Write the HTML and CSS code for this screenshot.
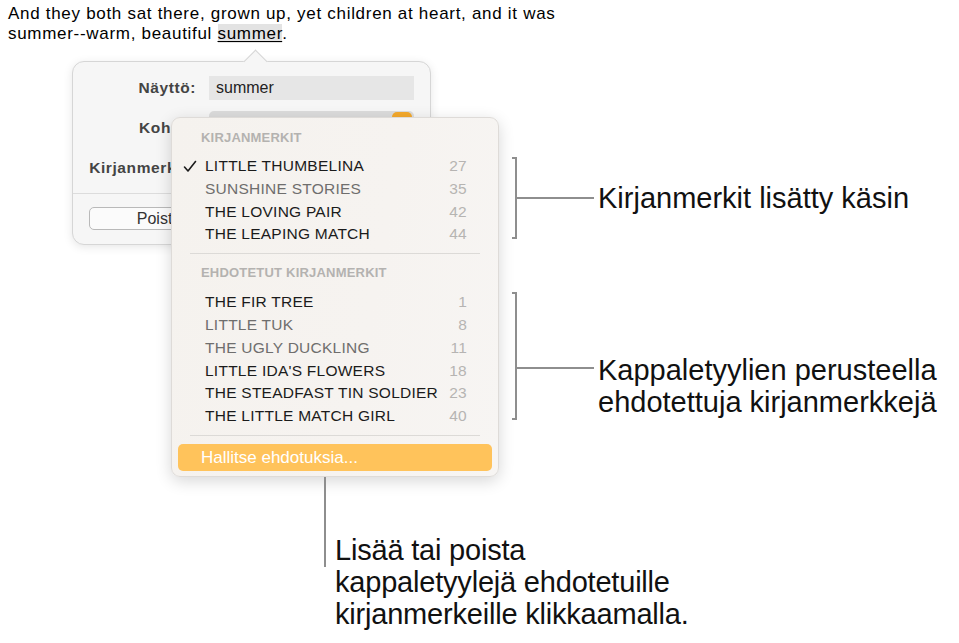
FILE: index.html
```html
<!DOCTYPE html>
<html>
<head>
<meta charset="utf-8">
<link rel="stylesheet" href="styles.css">
</head>
<body>
<div class="page">
  <p class="doc">And they both sat there, grown up, yet children at heart, and it was<br>summer--warm, beautiful <span class="sel">summer</span>.</p>

  <div class="popover">
    <div class="arrow"></div>
    <div class="pop-body">
      <div class="row r1">
        <span class="lbl">Näyttö:</span>
        <span class="field">summer</span>
      </div>
      <div class="row r2">
        <span class="lbl">Kohde:</span>
        <span class="field popup"><span class="stepper"></span></span>
      </div>
      <div class="row r3">
        <span class="lbl">Kirjanmerkki:</span>
      </div>
    </div>
    <div class="pop-foot">
      <span class="btn">Poista</span>
    </div>
  </div>

  <div class="menu">
    <div class="hdr">KIRJANMERKIT</div>
    <ul class="items">
      <li class="on"><svg class="chk" width="14" height="13" viewBox="0 0 14 13"><polyline points="1.5,7 5,11 12.5,1.5" fill="none" stroke="#1b1b1b" stroke-width="1.6" stroke-linecap="round" stroke-linejoin="round"/></svg><span class="name">LITTLE THUMBELINA</span><span class="num">27</span></li>
      <li class="dim"><span class="name">SUNSHINE STORIES</span><span class="num">35</span></li>
      <li><span class="name">THE LOVING PAIR</span><span class="num">42</span></li>
      <li><span class="name">THE LEAPING MATCH</span><span class="num">44</span></li>
    </ul>
    <div class="sep"></div>
    <div class="hdr">EHDOTETUT KIRJANMERKIT</div>
    <ul class="items">
      <li><span class="name">THE FIR TREE</span><span class="num">1</span></li>
      <li class="dim"><span class="name">LITTLE TUK</span><span class="num">8</span></li>
      <li class="dim"><span class="name">THE UGLY DUCKLING</span><span class="num">11</span></li>
      <li><span class="name">LITTLE IDA'S FLOWERS</span><span class="num">18</span></li>
      <li><span class="name">THE STEADFAST TIN SOLDIER</span><span class="num">23</span></li>
      <li><span class="name">THE LITTLE MATCH GIRL</span><span class="num">40</span></li>
    </ul>
    <div class="sep sep2"></div>
    <div class="manage">Hallitse ehdotuksia...</div>
  </div>

  <div class="callout c1">
    <div class="bracket b1"></div>
    <div class="lead"></div>
    <div class="ctext">Kirjanmerkit lisätty käsin</div>
  </div>

  <div class="callout c2">
    <div class="bracket b2"></div>
    <div class="lead"></div>
    <div class="ctext">Kappaletyylien perusteella<br>ehdotettuja kirjanmerkkejä</div>
  </div>

  <div class="callout c3">
    <div class="vline"></div>
    <div class="ctext">Lisää tai poista<br>kappaletyylejä ehdotetuille<br>kirjanmerkeille klikkaamalla.</div>
  </div>
</div>
</body>
</html>
```

FILE: styles.css
```css
* { box-sizing: border-box; }
html, body {
  margin: 0;
  padding: 0;
  background: #ffffff;
}
.page {
  position: relative;
  width: 959px;
  height: 643px;
  overflow: hidden;
  font-family: "Liberation Sans", Arial, sans-serif;
  color: #000;
}
.doc {
  margin: 0;
  padding: 4px 0 0 8px;
  font-size: 17px;
  line-height: 19.5px;
  letter-spacing: 0.7px;
}
.sel {
  background: #e3e3e3;
  text-decoration: underline;
  text-decoration-thickness: 1px;
  text-underline-offset: 2px;
}

/* popover */
.popover {
  position: relative;
  margin: 18px 0 0 72px;
  width: 359px;
  height: 184px;
  background: #f6f6f6;
  border: 1px solid #d6d6d6;
  border-radius: 12px;
  box-shadow: 0 2px 10px rgba(0,0,0,0.10);
}
.arrow {
  position: absolute;
  left: 174px;
  top: -9px;
  width: 17px;
  height: 17px;
  background: #f6f6f6;
  border-left: 1px solid #d6d6d6;
  border-top: 1px solid #d6d6d6;
  transform: rotate(45deg);
}
.pop-body {
  position: relative;
  padding-top: 14px;
  height: 132px;
  border-bottom: 1px solid #dcdcdc;
}
.row {
  display: flex;
  align-items: center;
  height: 24px;
}
.r2 { margin-top: 16px; }
.r3 { margin-top: 16px; }
.lbl {
  flex: none;
  width: 123px;
  text-align: right;
  font-weight: bold;
  font-size: 15.5px;
  color: #444;
  letter-spacing: 0.6px;
}
.field {
  margin-left: 13px;
  width: 205px;
  height: 24px;
  background: #e6e6e6;
  font-size: 16px;
  color: #222;
  padding: 3px 7px;
}
.popup {
  position: relative;
  align-self: flex-start;
  margin-top: -5px;
  height: 22px;
  background: #dcdcdc;
  border-radius: 5px;
}
.stepper {
  position: absolute;
  right: 2px;
  top: 1px;
  width: 20px;
  height: 18px;
  border-radius: 5px;
  background: #f4a92c;
}
.pop-foot {
  padding: 13px 0 0 16px;
}
.btn {
  display: block;
  width: 140px;
  height: 23px;
  border: 1px solid #b9b9b9;
  border-radius: 5px;
  background: #fbfbfb;
  font-size: 16px;
  color: #333;
  text-align: center;
  line-height: 21px;
}

/* menu */
.menu {
  position: absolute;
  left: 171px;
  top: 117px;
  width: 328px;
  height: 360px;
  background: linear-gradient(100deg, #f5f2ee 0%, #f6f3f0 60%, #f7f5f3 100%);
  border: 1px solid #dedbd8;
  border-radius: 9px;
  box-shadow: 0 4px 16px rgba(0,0,0,0.16);
  padding: 12px 0 0;
  font-family: "Liberation Sans", Arial, sans-serif;
}
.hdr {
  padding-left: 29px;
  font-size: 13px;
  line-height: 16px;
  font-weight: bold;
  color: #b4b2b0;
  letter-spacing: 0.2px;
}
.items {
  list-style: none;
  margin: 9px 0 0;
  padding: 0;
}
.sep + .hdr + .items { margin-top: 10px; }
.items li {
  position: relative;
  display: flex;
  justify-content: space-between;
  padding: 0 31px 0 33px;
  height: 22.8px;
  line-height: 22.8px;
  font-size: 15.5px;
  color: #1b1b1b;
  letter-spacing: 0.25px;
}
.items li.dim { color: #6f6e6d; }
.items .num { color: #b6b4b2; }
.chk {
  position: absolute;
  left: 11px;
  top: 5px;
}
.sep {
  margin: 7px 18px 0;
  height: 1px;
  background: #dcdad7;
}
.sep + .hdr { margin-top: 11px; }
.sep2 { margin-top: 7px; }
.manage {
  margin: 8px 6px 0;
  height: 27px;
  line-height: 27px;
  border-radius: 5px;
  background: #ffc35b;
  color: #ffffff;
  font-size: 17px;
  padding-left: 23px;
}

/* callouts */
.callout { position: absolute; }
.bracket {
  position: absolute;
  left: 0;
  width: 5px;
  border: 2px solid #8e8e8e;
  border-left: none;
}
.lead {
  position: absolute;
  height: 2px;
  background: #8e8e8e;
}
.ctext {
  position: absolute;
  font-size: 29px;
  line-height: 32px;
  color: #111;
  white-space: nowrap;
}
.c1 { left: 512px; top: 157px; }
.b1 { top: 0; height: 82px; }
.c1 .lead { left: 4px; top: 40px; width: 78px; }
.c1 .ctext { left: 86px; top: 25px; }

.c2 { left: 512px; top: 292px; }
.b2 { top: 0; height: 128px; }
.c2 .lead { left: 4px; top: 75px; width: 78px; }
.c2 .ctext { left: 86px; top: 62px; }

.c3 { left: 324px; top: 477px; }
.vline {
  position: absolute;
  left: 0;
  top: 0;
  width: 2px;
  height: 90px;
  background: #8e8e8e;
}
.c3 .ctext { left: 11px; top: 57px; letter-spacing: -0.2px; }
```
